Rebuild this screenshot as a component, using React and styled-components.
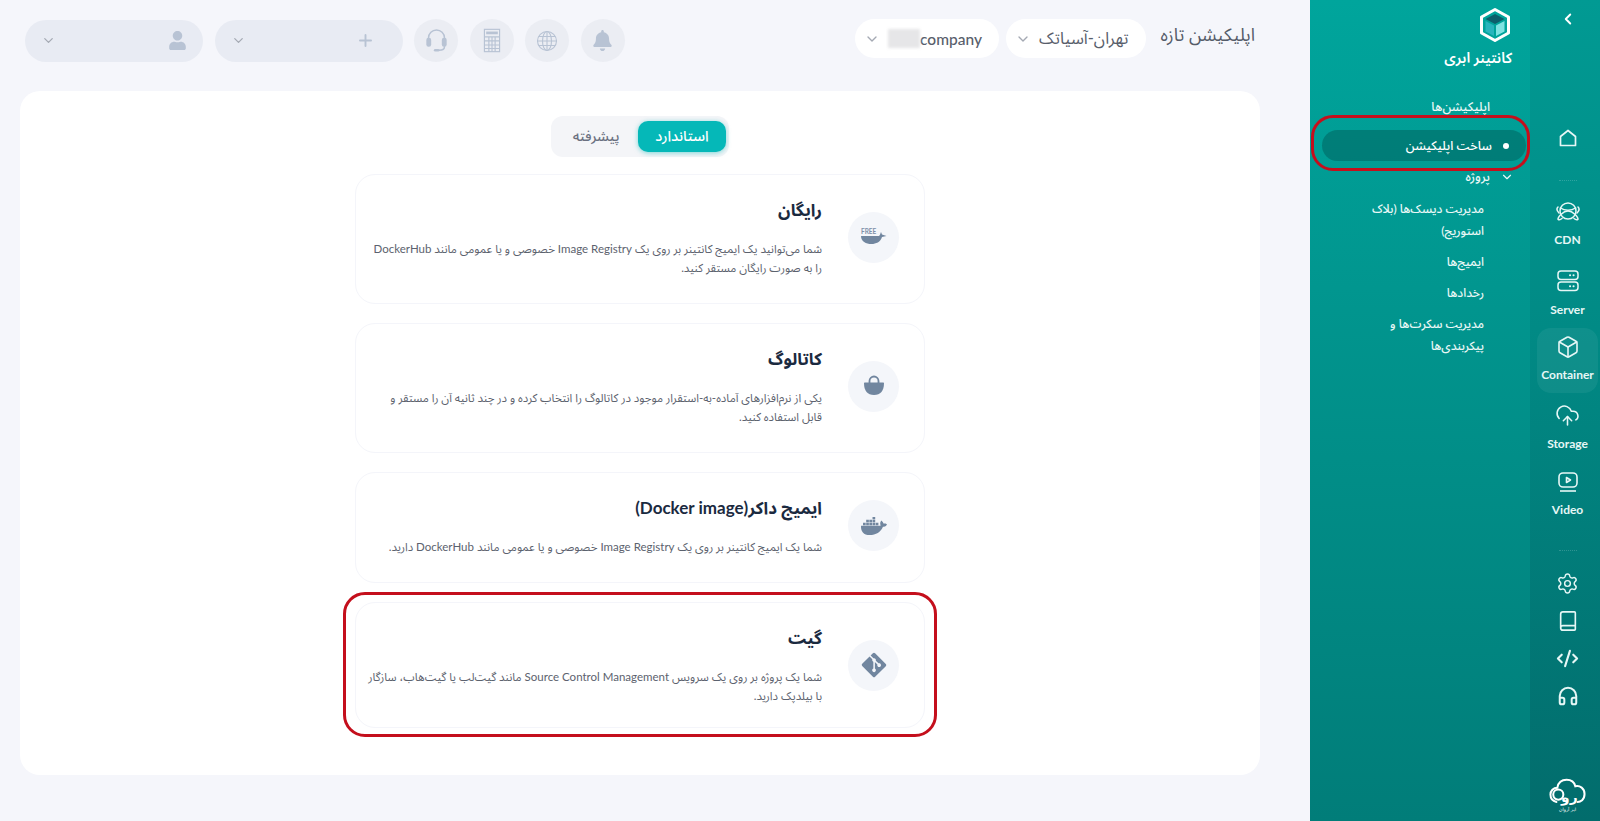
import React from 'react';
import styled, { createGlobalStyle } from 'styled-components';
import {
  ChevronLeft, ChevronDown, Box, CloudUpload, Settings, Book, CodeXml, Headphones, Plus,
} from 'lucide-react';
import { FaBell, FaUser, FaDocker, FaGitAlt } from 'react-icons/fa';

const GlobalStyle = createGlobalStyle`
  html, body { margin: 0; padding: 0; height: 100%; overflow: hidden; }
  body {
    background: #f5f6fb;
    font-family: Lato, "Noto Sans Arabic", "Vazirmatn", "DejaVu Sans", sans-serif;
  }
`;

const HomeIcon = () => (
  <svg width="24" height="24" viewBox="0 0 24 24" fill="none" stroke="currentColor" strokeWidth="1.7" strokeLinejoin="round">
    <path d="M4.500 10.500 12 4.500l7.500 6V19.500h-15z" />
  </svg>
);

const CdnIcon = () => (
  <svg width="26" height="24" viewBox="0 0 26 24" fill="none" stroke="currentColor" strokeWidth="1.5" strokeLinecap="round">
    <circle cx="13" cy="11" r="8" />
    <path d="M5.500 8c4 3 11 3 15 0" />
    <path d="M3 19c0-2 5-8 10-8s10 6 10 8c0 1-2 1-4-.5M3 19c0 1 2 1 4-.5" />
    <path d="M3 7c-2 2-1 4 1 6M23 7c2 2 1 4-1 6" />
  </svg>
);

const ServerIcon = () => (
  <svg width="26" height="26" viewBox="0 0 26 26" fill="none" stroke="currentColor" strokeWidth="1.5">
    <rect x="3" y="3" width="20" height="8.500" rx="3" />
    <rect x="3" y="14" width="20" height="8.500" rx="3" />
    <path d="M15 7.300h.1M18.500 7.300h.1M15 18.300h.1M18.500 18.300h.1" strokeLinecap="round" strokeWidth="2" />
  </svg>
);

const VideoIcon = () => (
  <svg width="24" height="24" viewBox="0 0 24 24" fill="none" stroke="currentColor" strokeWidth="1.6" strokeLinejoin="round">
    <rect x="3" y="3" width="18" height="14" rx="4" />
    <path d="M10.500 7.500v5l4-2.500z" />
    <path d="M4 21h16" />
  </svg>
);

const HeadsetIcon = () => (
  <svg width="23" height="27" viewBox="0 0 26 30" fill="none" stroke="currentColor" strokeWidth="1.700" strokeLinecap="round">
    <path d="M4 14v-2a9 9 0 0 1 18 0v2" />
    <rect x="1.500" y="12" width="5.500" height="10" rx="2.500" fill="currentColor" stroke="none" />
    <rect x="19" y="12" width="5.500" height="10" rx="2.500" fill="currentColor" stroke="none" />
    <path d="M22 22c0 3-3 4-6 4" />
    <rect x="10" y="24.500" width="6.500" height="3" rx="1.500" fill="currentColor" stroke="none" />
  </svg>
);

const CalculatorIcon = () => (
  <svg width="18" height="25" viewBox="0 0 20 28" fill="none" stroke="currentColor" strokeWidth="1.300">
    <rect x="1.500" y="1.500" width="17" height="25" />
    <rect x="3.500" y="4" width="13" height="3" fill="currentColor" stroke="none" />
    <path d="M1.500 10h17M1.500 14.500h17M1.500 19h17M1.500 23h17M6.500 10v16.500M10 10v16.500M13.500 10v16.500" />
  </svg>
);

const GlobeIcon = () => (
  <svg width="24" height="24" viewBox="0 0 24 24" fill="none" stroke="currentColor" strokeWidth="1.100">
    <circle cx="12" cy="12" r="9.500" />
    <ellipse cx="12" cy="12" rx="4.500" ry="9.500" />
    <path d="M12 2.500v19M2.500 12h19M3.800 7.500h16.400M3.800 16.500h16.400" />
  </svg>
);

const CubeLogo = () => (
  <svg width="34" height="36" viewBox="0 0 34 36">
    <path d="M17 2.500 30.500 10v16L17 33.500 3.500 26V10z" fill="none" stroke="#fff" strokeWidth="3" strokeLinejoin="round" />
    <path d="M17 7 26.500 12 17 17 7.500 12z" fill="#0d5f6b" />
    <path d="M7.500 14 16 18.500V29L7.500 24.500z" fill="#29b5bd" />
    <path d="M26.500 14 18 18.500V29l8.500-4.500z" fill="#7fe3e2" />
  </svg>
);

const CloudLogo = () => (
  <svg width="37" height="35" viewBox="0 0 40 38" fill="none" stroke="#fff" strokeWidth="2.200">
    <path d="M8 26C3.500 25 1.500 22 1.500 18S4.500 10.500 9 10.500C10 5 14 2 19 2s8.500 3 9.500 7c5-1 10 2 10 8.500S34 26 31 26" strokeLinecap="round" />
    <circle cx="10" cy="18" r="5.500" />
    <text x="22" y="26" textAnchor="middle" fontSize="15" fontWeight="700" fill="#fff" stroke="none" fontFamily="'DejaVu Sans', sans-serif">رو</text>
    <text x="20" y="36" textAnchor="middle" fontSize="5" fill="#fff" stroke="none" fontFamily="'DejaVu Sans', sans-serif">ابر آروان</text>
  </svg>
);

const WhaleFree = () => (
  <svg width="28" height="24" viewBox="0 0 28 24" direction="ltr">
    <text x="1" y="8.500" fontSize="6.500" fontWeight="700" fill="#7e90a9" fontFamily="Lato, sans-serif">FREE</text>
    <path d="M1 11h18c1-1 1.500-2.500 2-4l1 2.500 4.500 1.500-4.500 1c-1.500 5-6 7-10.500 7C6 19 1 16.500 1 11z" fill="#71869f" />
  </svg>
);

const BagIcon = () => (
  <svg width="22" height="24" viewBox="0 0 22 24" fill="#71869f">
    <path d="M6.500 9V7a4.500 4.500 0 0 1 9 0v2" fill="none" stroke="#71869f" strokeWidth="1.800" />
    <path d="M2 8.500h18c.6 0 1 .4 1 1C21 16.500 17.500 21 11 21S1 16.500 1 9.500c0-.6.4-1 1-1z" />
  </svg>
);

const railItems = [
  { label: 'CDN', icon: <CdnIcon /> },
  { label: 'Server', icon: <ServerIcon /> },
  { label: 'Container', icon: <Box size={24} strokeWidth={1.6} />, active: true },
  { label: 'Storage', icon: <CloudUpload size={25} strokeWidth={1.5} /> },
  { label: 'Video', icon: <VideoIcon /> },
];

const cards = [
  {
    title: 'رایگان',
    lines: [
      'شما می‌توانید یک ایمیج کانتینر بر روی یک Image Registry خصوصی و یا عمومی مانند DockerHub',
      'را به صورت رایگان مستقر کنید.',
    ],
    icon: <WhaleFree />,
  },
  {
    title: 'کاتالوگ',
    lines: [
      'یکی از نرم‌افزارهای آماده-به-استقرار موجود در کاتالوگ را انتخاب کرده و در چند ثانیه آن را مستقر و',
      'قابل استفاده کنید.',
    ],
    icon: <BagIcon />,
  },
  {
    title: 'ایمیج داکر(Docker image)',
    lines: ['شما یک ایمیج کانتینر بر روی یک Image Registry خصوصی و یا عمومی مانند DockerHub دارید.'],
    icon: <FaDocker size={26} color="#71869f" />,
  },
  {
    title: 'گیت',
    lines: [
      'شما یک پروژه بر روی یک سرویس Source Control Management مانند گیت‌لب یا گیت‌هاب، سازگار',
      'با بیلدپک دارید.',
    ],
    icon: <FaGitAlt size={28} color="#71869f" />,
    marked: true,
  },
];

const App = () => (
  <>
    <GlobalStyle />
    <Page dir="rtl">
      <Rail>
        <Collapse><ChevronLeft size={18} strokeWidth={2.500} /></Collapse>
        <HomeLink><HomeIcon /></HomeLink>
        <Dots />
        <RailList>
          {railItems.map(item => (
            <RailItem key={item.label} $active={item.active}>
              {item.icon}
              <RailLabel>{item.label}</RailLabel>
            </RailItem>
          ))}
        </RailList>
        <Dots $low />
        <ToolList>
          <Settings size={23} strokeWidth={1.5} />
          <Book size={22} strokeWidth={1.8} />
          <CodeXml size={23} strokeWidth={2.200} />
          <Headphones size={22} strokeWidth={2.200} />
        </ToolList>
        <BrandMark><CloudLogo /></BrandMark>
      </Rail>

      <Nav>
        <NavHead>
          <CubeLogo />
          <NavTitle>کانتینر ابری</NavTitle>
        </NavHead>
        <NavLink>اپلیکیشن‌ها</NavLink>
        <ActiveLink>
          <Bullet />
          ساخت اپلیکیشن
          <Marker $inset="-15px -4px -10px -11px" />
        </ActiveLink>
        <NavLink>
          <NavChevron><ChevronDown size={14} /></NavChevron>
          پروژه
        </NavLink>
        <SubList>
          <SubLink>مدیریت دیسک‌ها (بلاک استوریج)</SubLink>
          <SubLink>ایمیج‌ها</SubLink>
          <SubLink>رخدادها</SubLink>
          <SubLink>مدیریت سکرت‌ها و پیکربندی‌ها</SubLink>
        </SubList>
      </Nav>

      <Main>
        <TopBar>
          <TopGroup>
            <PageTitle>اپلیکیشن تازه</PageTitle>
            <SelectPill>
              تهران-آسیاتک
              <ChevronDown size={16} color="#a4a9b3" />
            </SelectPill>
            <SelectPill>
              <LatinName dir="ltr">company</LatinName>
              <BlurBlock />
              <ChevronDown size={16} color="#a4a9b3" />
            </SelectPill>
          </TopGroup>
          <TopGroup $tight>
            <RoundButton><FaBell size={21} /></RoundButton>
            <RoundButton><GlobeIcon /></RoundButton>
            <RoundButton><CalculatorIcon /></RoundButton>
            <RoundButton><HeadsetIcon /></RoundButton>
            <MutedPill $width={188} $pad={28}>
              <Plus size={19} strokeWidth={2.400} />
              <ChevronDown size={15} color="#a4a9b3" />
            </MutedPill>
            <MutedPill $width={178} $pad={16}>
              <FaUser size={19} />
              <ChevronDown size={15} color="#a4a9b3" />
            </MutedPill>
          </TopGroup>
        </TopBar>

        <Panel>
          <Tabs>
            <Tab $active>استاندارد</Tab>
            <Tab>پیشرفته</Tab>
          </Tabs>
          <CardList>
            {cards.map(card => (
              <Card key={card.title} $compact={card.marked}>
                <CardIcon>{card.icon}</CardIcon>
                <CardBody>
                  <CardTitle>{card.title}</CardTitle>
                  <CardText>
                    {card.lines.map(line => <CardLine key={line}>{line}</CardLine>)}
                  </CardText>
                </CardBody>
                {card.marked && <Marker $inset="-11px -13px -10px -13px" />}
              </Card>
            ))}
          </CardList>
        </Panel>
      </Main>
    </Page>
  </>
);

const Page = styled.div`
  display: flex;
  width: 1600px;
  height: 821px;
  overflow: hidden;
`;

const Rail = styled.aside`
  width: 70px;
  flex: none;
  box-sizing: border-box;
  padding: 8px 2px 6px 7px;
  display: flex;
  flex-direction: column;
  align-items: center;
  color: #e6f7f6;
  background: linear-gradient(180deg, #019a93 0%, #018a85 40%, #026c6c 100%);
`;

const Collapse = styled.div`
  height: 22px;
  display: flex;
  align-items: center;
  color: #fff;
`;

const HomeLink = styled.div`
  height: 24px;
  margin-top: 96px;
`;

const Dots = styled.div`
  width: 18px;
  height: 0;
  border-top: 1.500px dotted rgba(255, 255, 255, 0.18);
  margin-top: ${props => props.$low ? '22px' : '30px'};
`;

const RailList = styled.div`
  margin-top: 12px;
  display: flex;
  flex-direction: column;
  gap: 2.500px;
`;

const RailItem = styled.div`
  width: 61px;
  height: 65px;
  box-sizing: border-box;
  padding-top: 7px;
  display: flex;
  flex-direction: column;
  align-items: center;
  border-radius: 14px;
  background: ${props => props.$active ? 'rgba(255, 255, 255, 0.06)' : 'transparent'};
`;

const RailLabel = styled.div`
  margin-top: 8px;
  font-size: 12px;
  line-height: 16px;
  font-weight: 700;
  color: #e6f7f6;
`;

const ToolList = styled.div`
  margin-top: 21px;
  display: flex;
  flex-direction: column;
  align-items: center;
  gap: 15px;
`;

const BrandMark = styled.div`
  margin-top: auto;
  margin-bottom: 2px;
  height: 35px;
`;

const Nav = styled.nav`
  width: 220px;
  flex: none;
  box-sizing: border-box;
  padding-left: 12px;
  color: #eaf8f7;
  background: linear-gradient(180deg, #00a59c 0%, #01968f 35%, #017d79 100%);
`;

const NavHead = styled.div`
  height: 91px;
  box-sizing: border-box;
  padding: 7px 18px 0 0;
  display: flex;
  flex-direction: column;
  align-items: flex-start;
`;

const NavTitle = styled.div`
  margin-top: 4px;
  font-size: 14.500px;
  line-height: 22px;
  font-weight: 600;
  color: #fff;
`;

const NavLink = styled.div`
  height: 32px;
  padding-right: 40px;
  display: flex;
  align-items: center;
  font-size: 12.500px;
  font-weight: 500;
`;

const NavChevron = styled.span`
  display: flex;
  margin: 0 -24px 0 10px;
`;

const ActiveLink = styled.div`
  position: relative;
  height: 31px;
  margin: 7px 4px 0 0;
  padding-right: 17px;
  display: flex;
  align-items: center;
  border-radius: 16px;
  font-size: 12.500px;
  font-weight: 500;
  color: #fff;
  background: rgba(0, 60, 60, 0.33);
`;

const Bullet = styled.span`
  width: 6px;
  height: 6px;
  margin-left: 11px;
  border-radius: 50%;
  background: #fff;
`;

const SubList = styled.div`
  margin-top: 5px;
  padding: 0 46px 0 26px;
  display: flex;
  flex-direction: column;
  gap: 9px;
`;

const SubLink = styled.div`
  font-size: 12px;
  line-height: 22px;
  font-weight: 500;
`;

const Marker = styled.span`
  position: absolute;
  inset: ${props => props.$inset};
  border: 3px solid #c40f1c;
  border-radius: 22px;
  pointer-events: none;
`;

const Main = styled.main`
  flex: 1;
  min-width: 0;
  box-sizing: border-box;
  padding: 0 50px 0 20px;
`;

const TopBar = styled.header`
  height: 91px;
  box-sizing: border-box;
  padding: 19px 5px 0 5px;
  display: flex;
  justify-content: space-between;
  align-items: flex-start;
`;

const TopGroup = styled.div`
  display: flex;
  align-items: center;
  gap: ${props => props.$tight ? '11.500px' : '7px'};
`;

const PageTitle = styled.div`
  margin-left: 8px;
  margin-top: -7px;
  font-size: 18px;
  font-weight: 400;
  color: #555c69;
`;

const SelectPill = styled.div`
  height: 39px;
  box-sizing: border-box;
  padding: 0 17px 0 9px;
  display: flex;
  align-items: center;
  gap: 8px;
  border-radius: 20px;
  background: #fff;
  font-size: 16.500px;
  font-weight: 400;
  color: #585e6b;
`;

const LatinName = styled.span`
  font-size: 15.500px;
  font-weight: 500;
`;

const BlurBlock = styled.span`
  width: 32px;
  height: 19px;
  margin-right: -8px;
  background: #e6e6e8;
  filter: blur(1.500px);
`;

const RoundButton = styled.div`
  width: 44px;
  height: 43px;
  display: flex;
  align-items: center;
  justify-content: center;
  border-radius: 50%;
  background: #ebedf3;
  color: #b8c3d4;
`;

const MutedPill = styled.div`
  width: ${props => props.$width}px;
  height: 42px;
  box-sizing: border-box;
  padding: 0 ${props => props.$pad}px 0 16px;
  display: flex;
  align-items: center;
  justify-content: space-between;
  border-radius: 21px;
  background: #e8ebf3;
  color: #b8c3d4;
`;

const Panel = styled.section`
  height: 684px;
  box-sizing: border-box;
  padding-top: 25px;
  display: flex;
  flex-direction: column;
  align-items: center;
  border-radius: 20px;
  background: #fff;
`;

const Tabs = styled.div`
  height: 41px;
  box-sizing: border-box;
  padding: 5px 3px;
  display: flex;
  align-items: stretch;
  border-radius: 12px;
  background: #f4f5f8;
`;

const Tab = styled.div`
  width: ${props => props.$active ? '88px' : '84px'};
  display: flex;
  align-items: center;
  justify-content: center;
  border-radius: 10px;
  font-size: ${props => props.$active ? '14.500px' : '14px'};
  font-weight: 500;
  color: ${props => props.$active ? '#fff' : '#6a7080'};
  background: ${props => props.$active ? '#05b8b8' : 'transparent'};
  box-shadow: ${props => props.$active ? '0 1px 5px rgba(5, 184, 184, 0.5)' : 'none'};
`;

const CardList = styled.div`
  width: 570px;
  margin-top: 17px;
  display: flex;
  flex-direction: column;
  gap: 19px;
`;

const Card = styled.article`
  position: relative;
  box-sizing: border-box;
  padding: 22px 25px ${props => props.$compact ? '22px' : '26px'} 0;
  display: flex;
  align-items: center;
  gap: 26px;
  border: 1px solid #f4f5fa;
  border-radius: 20px;
  background: #fff;
`;

const CardIcon = styled.div`
  width: 51px;
  height: 51px;
  flex: none;
  display: flex;
  align-items: center;
  justify-content: center;
  border-radius: 50%;
  background: #f4f6fa;
`;

const CardBody = styled.div`
  flex: 1;
  min-width: 0;
`;

const CardTitle = styled.h3`
  margin: 0 0 16px;
  font-size: 17px;
  line-height: 26px;
  font-weight: 700;
  color: #1b2a3f;
`;

const CardText = styled.div`
  font-size: 11.500px;
  line-height: 19px;
  color: #5c626e;
`;

const CardLine = styled.div`
  white-space: nowrap;
`;

export default App;
